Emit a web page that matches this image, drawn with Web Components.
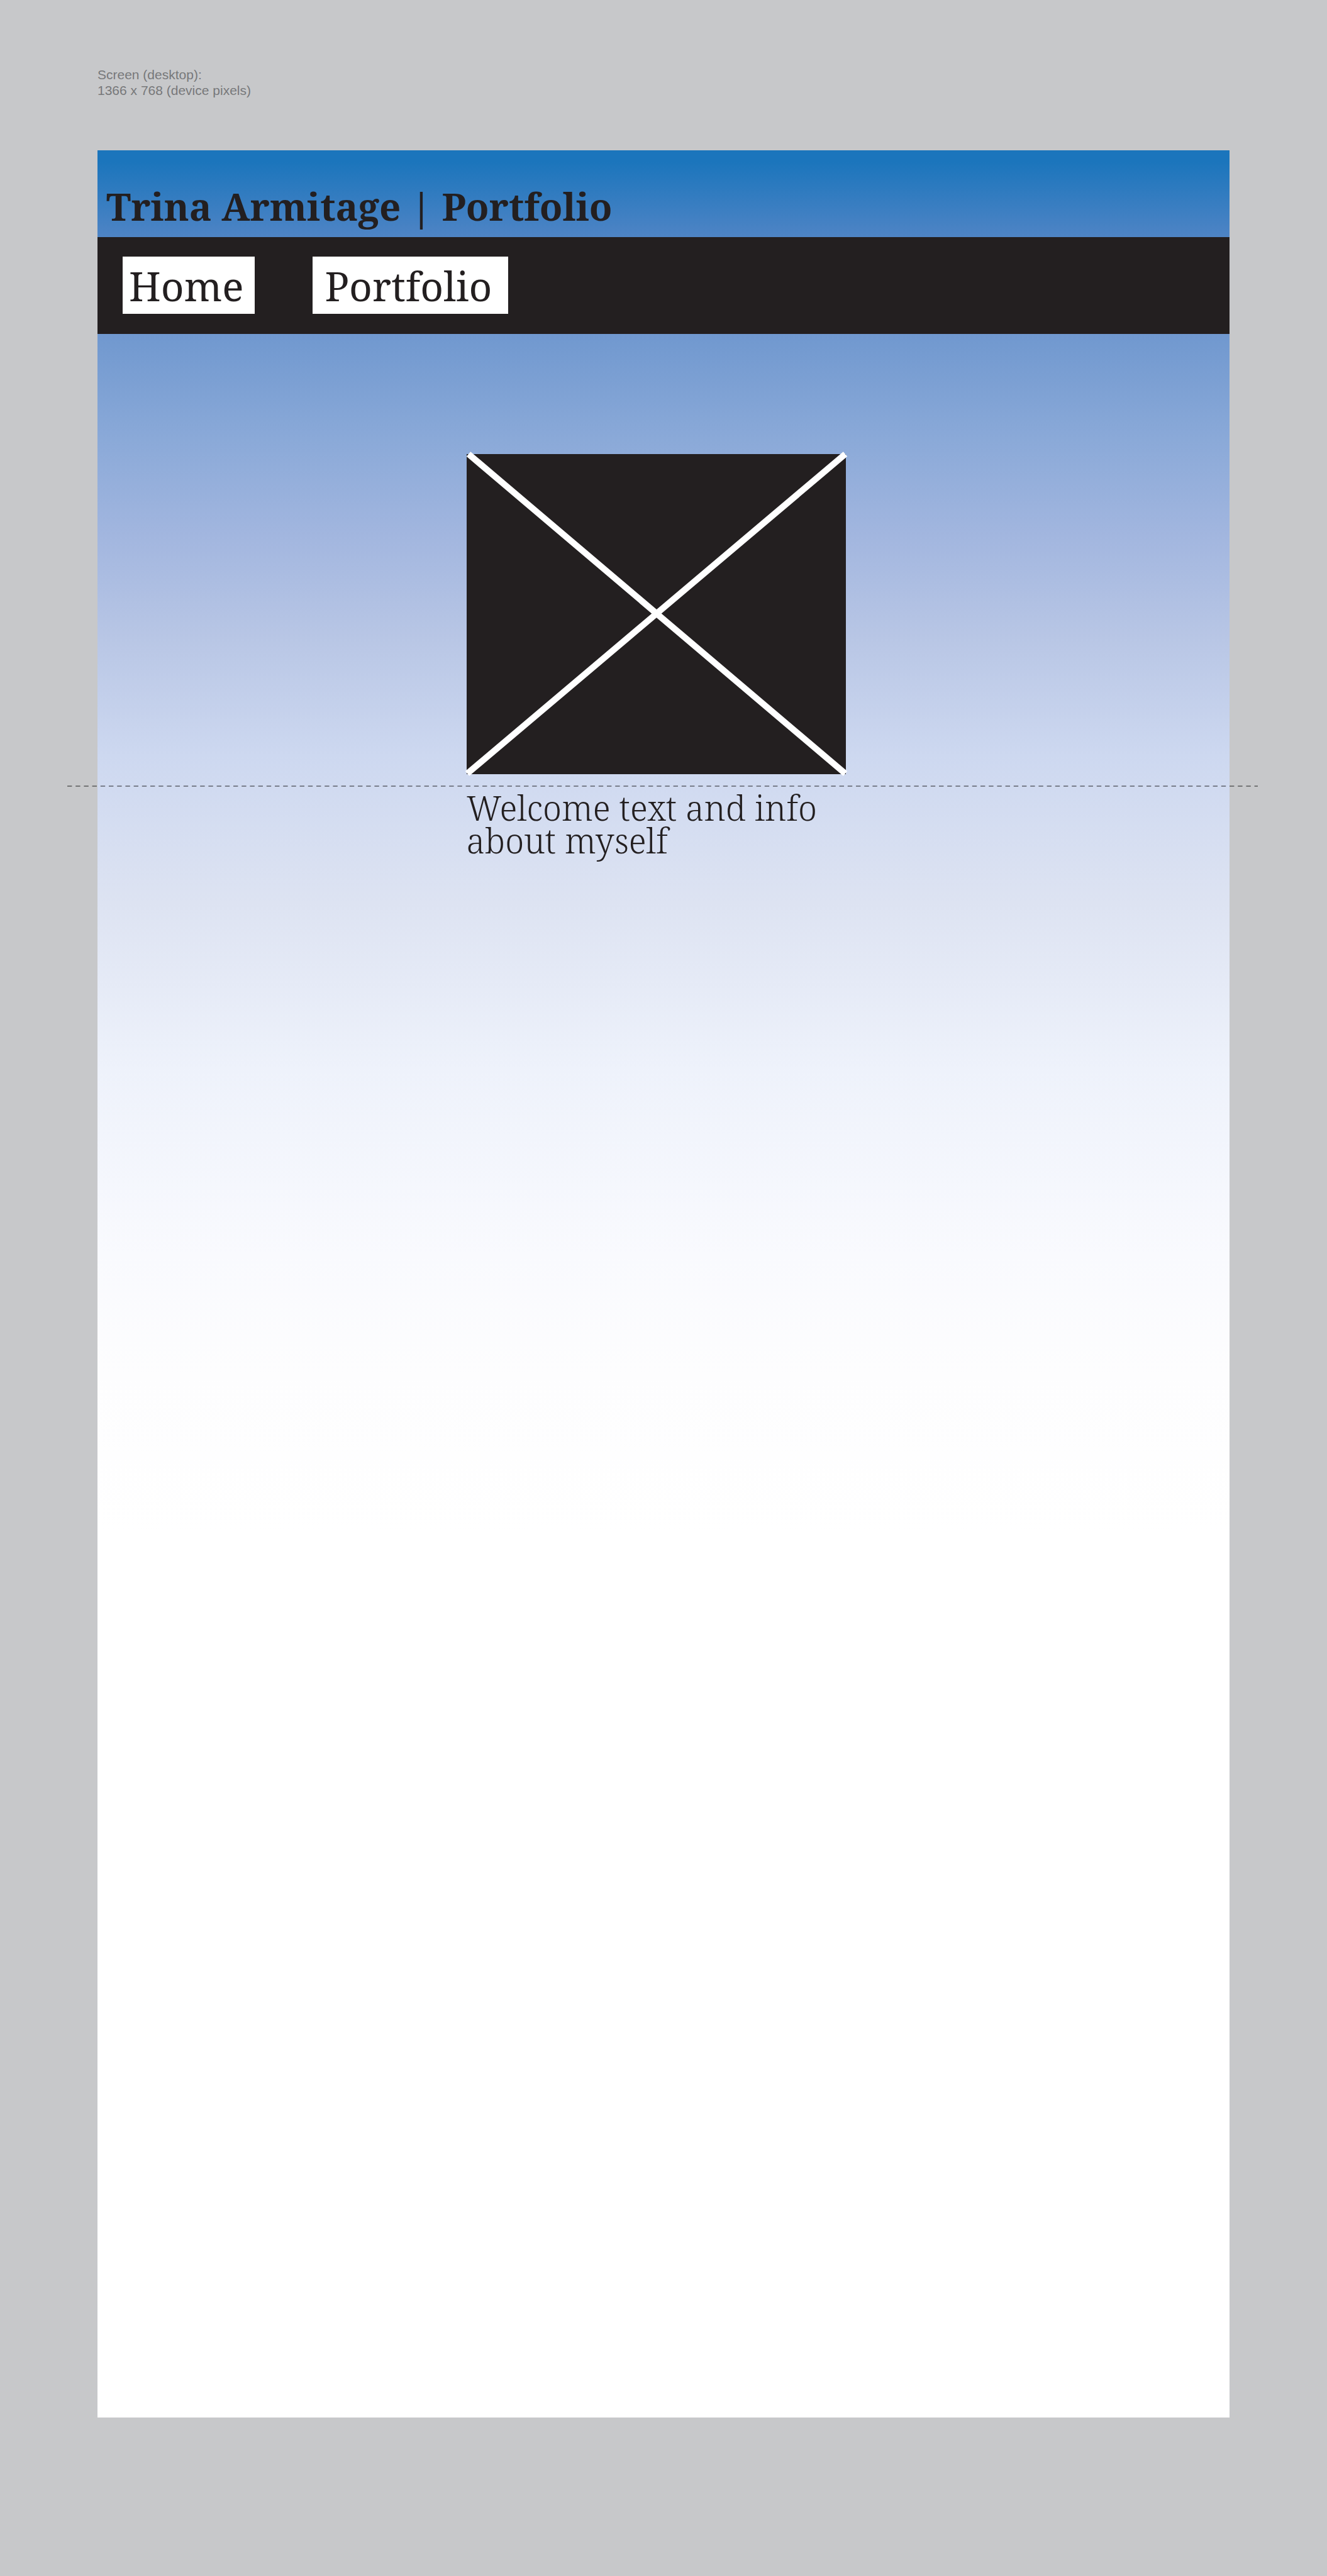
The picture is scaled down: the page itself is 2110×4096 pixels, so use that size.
<!DOCTYPE html>
<html lang="en">
<head>
<meta charset="utf-8">
<title>Trina Armitage | Portfolio</title>
<style>
  body { margin: 0; min-height: 100vh; background: #c7c8ca; }
</style>
</head>
<body>
<wire-board>
  <screen-note slot="note">Screen (desktop):<br>1366 x 768 (device pixels)</screen-note>
  <site-header>Trina Armitage | Portfolio</site-header>
  <site-nav>
    <nav-item href="#home">Home</nav-item>
    <nav-item href="#portfolio" roomy>Portfolio</nav-item>
  </site-nav>
  <welcome-panel>Welcome text and info about myself</welcome-panel>
  <fold-line></fold-line>
</wire-board>

<script>
const define = (name, html) => {
  const template = document.createElement('template');
  template.innerHTML = html;
  customElements.define(name, class extends HTMLElement {
    constructor() {
      super();
      this.attachShadow({ mode: 'open' }).append(template.content.cloneNode(true));
    }
    connectedCallback() {
      const link = this.shadowRoot.querySelector('a');
      if (link) link.href = this.getAttribute('href');
    }
  });
};

define('wire-board', `
  <style>
    :host {
      --ink: #231f20;
      display: flex; flex-direction: column; gap: 83px;
      box-sizing: border-box; padding: 106px 155px 252px;
      color: var(--ink);
      font-family: "Roboto Slab", "Noto Serif", serif;
    }
    .page {
      position: relative;
      display: flex; flex-direction: column;
      aspect-ratio: 1800 / 3605;
      background: linear-gradient(#1b75bc 0%, #1b75bc 0.5%, #4e84c5 3.8%, #7098cf 8.1%,
        #8aa9d8 12.7%, #a2b6df 17%, #b8c6e5 21.5%, #cdd8f0 26.7%, #dde3f2 33.2%,
        #eef2fb 40.5%, #f9fafe 48.7%, #fdfdfe 54%, #fff 61%);
    }
  </style>
  <slot name="note"></slot>
  <div class="page"><slot></slot></div>
`);

define('screen-note', `
  <style>
    :host { display: block; color: #77787a; font: 21px/25px "Liberation Sans", Arial, sans-serif; }
  </style>
  <slot></slot>
`);

define('site-header', `
  <style>
    :host { display: block; padding: 59px 14px 19px; }
    h1 { margin: 0; font-size: 60px; line-height: 60px; font-weight: 700; }
  </style>
  <h1><slot></slot></h1>
`);

define('site-nav', `
  <style>
    :host { display: block; background: var(--ink); }
    nav { display: flex; gap: 92px; padding: 31px 40px 32px; }
  </style>
  <nav><slot></slot></nav>
`);

define('nav-item', `
  <style>
    :host { display: block; }
    a {
      display: block; padding: 15px 18px 12px 10px;
      background: #fff; color: var(--ink);
      font-size: 64px; line-height: 64px; text-decoration: none;
    }
    :host([roomy]) a { padding-left: 19px; padding-right: 26px; }
  </style>
  <a><slot></slot></a>
`);

define('welcome-panel', `
  <style>
    :host { display: block; width: 33.5%; margin: 191px 0 0 32.6%; }
    svg { display: block; width: 100%; overflow: visible; }
    p { margin: 27px 0 0; font-size: 54px; line-height: 52px; font-weight: 300; }
  </style>
  <svg viewBox="0 0 603 509" role="img" aria-label="Image placeholder">
    <rect width="603" height="509" fill="#231f20"/>
    <path d="M3 0L602 508M1 508L602 0" stroke="#fff" stroke-width="10"/>
  </svg>
  <p><slot></slot></p>
`);

define('fold-line', `
  <style>
    :host { position: absolute; top: 1010px; left: -48px; right: -45px; height: 2px; }
    svg { display: block; width: 100%; height: 2px; }
  </style>
  <svg aria-hidden="true">
    <line x1="0" y1="1" x2="100%" y2="1" stroke="#000" stroke-opacity=".42" stroke-width="2" stroke-dasharray="7.400 5.800"/>
  </svg>
`);
</script>
</body>
</html>
